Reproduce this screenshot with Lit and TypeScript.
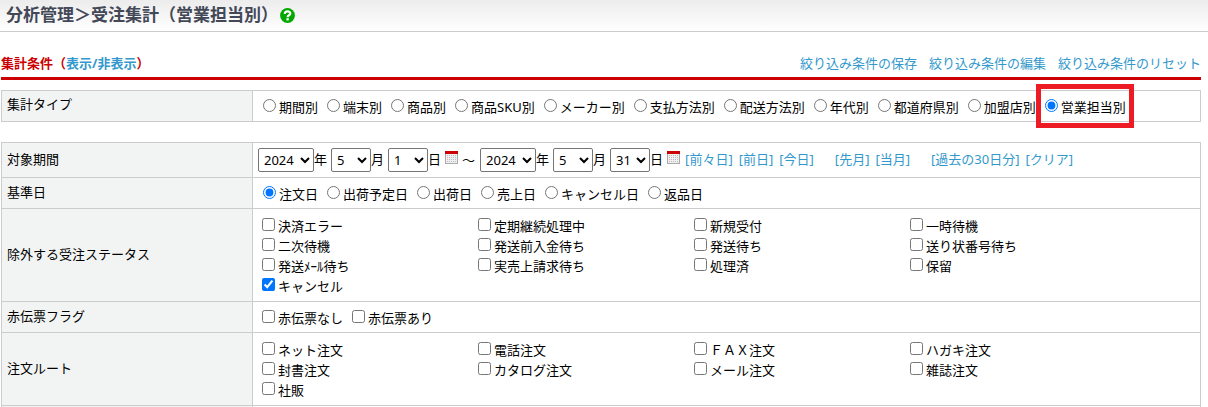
import { LitElement, html, css, svg } from "lit";
import { customElement, state } from "lit/decorators.js";

const TYPES = ["期間別", "端末別", "商品別", "商品SKU別", "メーカー別", "支払方法別", "配送方法別", "年代別", "都道府県別", "加盟店別", "営業担当別"];
const BASE_DATES = ["注文日", "出荷予定日", "出荷日", "売上日", "キャンセル日", "返品日"];
const STATUSES = [
  "決済エラー", "定期継続処理中", "新規受付", "一時待機",
  "二次待機", "発送前入金待ち", "発送待ち", "送り状番号待ち",
  "発送ﾒｰﾙ待ち", "実売上請求待ち", "処理済", "保留",
  "キャンセル",
];
const ROUTES = ["ネット注文", "電話注文", "ＦＡＸ注文", "ハガキ注文", "封書注文", "カタログ注文", "メール注文", "雑誌注文", "社販"];
const range = (from: number, to: number) => Array.from({ length: to - from + 1 }, (_, i) => from + i);

@customElement("app-root")
export class AppRoot extends LitElement {
  @state() private type = "営業担当別";
  @state() private baseDate = "注文日";
  @state() private open = true;

  static styles = css`
    :host {
      display: block;
      font: 13px/20px "Noto Sans", "Noto Sans CJK JP", sans-serif;
      color: #000;
      background: #fff;
    }
    .header {
      display: flex;
      align-items: center;
      gap: 2px;
      height: 31px;
      padding: 0 6px;
      border-bottom: 1px solid #ccc;
      background: linear-gradient(#ececec, #fff);
    }
    .title {
      margin: 0;
      font: bold 17px/28px "Noto Sans CJK JP", sans-serif;
      color: #434857;
      padding-bottom: 3px;
    }
    .help { display: block; width: 15px; height: 15px; }
    .main { padding: 22px 7px 0 1px; }
    .section {
      display: flex;
      justify-content: space-between;
      align-items: center;
      border-bottom: 3px solid #c00;
      height: 23px;
    }
    .heading { margin: 0; padding-bottom: 6px; font-size: 13px; line-height: 20px; color: #c00; }
    .actions { display: flex; gap: 12px; padding-bottom: 6px; }
    a { color: #39c; text-decoration: none; }
    .grid {
      width: 100%;
      border-collapse: collapse;
      table-layout: fixed;
      margin-top: 10px;
    }
    .grid + .grid { margin-top: 20px; }
    .grid th, .grid td { border: 1px solid #ccc; padding: 5px; text-align: left; vertical-align: middle; font-weight: normal; }
    .grid th { width: 240px; padding: 4px 5px 6px; background: #f2f4f4; }
    .grid .top { padding: 3px 5px 7px; vertical-align: top; }
    .grid .wide { padding: 7px 5px 5px; }
    .grid .next th, .grid .next td { height: 1px; padding: 0; border-bottom: 0; }
    .choices { display: flex; flex-wrap: wrap; column-gap: 6px; }
    .choice { display: flex; align-items: flex-start; height: 20px; white-space: nowrap; }
    .choice input { flex: none; width: 13px; height: 13px; margin: 3px 3px 0; }
    .choices .choice:first-child input { margin-left: 5px; }
    .choices .choice:first-child input[type="checkbox"] { margin-left: 4px; }
    .choices span { padding-top: 1px; }
    .checks { display: grid; grid-template-columns: repeat(3, 216px) 1fr; }
    .checks .choice input { margin: 2px 3px 0 4px; }
    .marked { position: relative; }
    .marked::after {
      content: "";
      position: absolute;
      inset: -12px -8px -12px -6px;
      border: 5px solid #ed1c24;
      pointer-events: none;
    }
    .period { display: flex; align-items: center; white-space: nowrap; }
    select {
      height: 24px;
      margin: 0;
      padding: 0 0 0 1px;
      border: 1px solid #767676;
      border-radius: 2px;
      background: #fff;
      color: #000;
      font: inherit;
    }
    .year { width: 56px; }
    .short { width: 40px; }
    .unit { margin-right: 4px; padding-bottom: 2px; }
    .calendar { padding: 0; margin-bottom: 5px; border: 0; background: none; }
    .calendar svg { display: block; width: 13px; height: 13px; }
    .tilde { margin: 0 5px 0 4px; }
    .presets { display: flex; gap: 21px; margin-left: 5px; padding-bottom: 2px; }
    .presets span { display: flex; gap: 6px; }
  `;

  private radios(name: string, items: string[], current: string, pick: (v: string) => void, marked = "") {
    return html`<div class="choices">${items.map(
      (t) => html`<label class="choice ${t === marked ? "marked" : ""}"><input type="radio" name=${name} .checked=${t === current} @change=${() => pick(t)} /><span>${t}</span></label>`
    )}</div>`;
  }

  private checks(items: string[], cls: string, checked = "") {
    return html`<div class=${cls}>${items.map(
      (t) => html`<label class="choice"><input type="checkbox" ?checked=${t === checked} /><span>${t}</span></label>`
    )}</div>`;
  }

  private picker(label: string, cls: string, from: number, to: number, value: number) {
    return html`<select class=${cls} aria-label=${label}>${range(from, to).map((n) => html`<option ?selected=${n === value}>${n}</option>`)}</select>`;
  }

  private date(label: string, day: number) {
    return html`${this.picker(`${label} 年`, "year", 2015, 2030, 2024)}<span class="unit">年</span>
      ${this.picker(`${label} 月`, "short", 1, 12, 5)}<span class="unit">月</span>
      ${this.picker(`${label} 日`, "short", 1, 31, day)}<span class="unit">日</span>
      <button class="calendar" type="button" aria-label=${`${label} カレンダー`}>
        <svg viewBox="0 0 13 13" shape-rendering="crispEdges">
          <rect width="13" height="13" fill="#aaa" />
          <rect x="1" y="3" width="11" height="9" fill="#f0f0f0" />
          <rect width="13" height="3" fill="#c00" />
          ${[4, 6, 8, 10].map((y) => [2, 4, 6, 8, 10].map((x) => svg`<rect x=${x} y=${y} width="1" height="1" fill=${x === 2 ? "#e2b0b0" : "#bbb"} />`))}
        </svg>
      </button>`;
  }

  private links(items: string[]) {
    return html`<span>${items.map((t) => html`<a href="#">[${t}]</a>`)}</span>`;
  }

  render() {
    return html`
      <header class="header">
        <h1 class="title">分析管理＞受注集計（営業担当別）</h1>
        <a href="#" aria-label="ヘルプ"><svg class="help" viewBox="0 0 15 15">
          <circle cx="7.5" cy="7.5" r="7.4" fill="#00a800" />
          <path d="M4.8 5.9C4.8 2.6 10.3 2.7 10.3 5.6C10.3 7.4 7.6 7.2 7.6 9.2" fill="none" stroke="#fff" stroke-width="2.2" />
          <rect x="6.4" y="10.2" width="2.4" height="2.2" fill="#fff" />
        </svg></a>
      </header>
      <main class="main">
        <div class="section">
          <h2 class="heading">集計条件（<a href="#" @click=${(e: Event) => { e.preventDefault(); this.open = !this.open; }}>表示/非表示</a>）</h2>
          <nav class="actions"><a href="#">絞り込み条件の保存</a><a href="#">絞り込み条件の編集</a><a href="#">絞り込み条件のリセット</a></nav>
        </div>
        ${this.open ? html`
        <table class="grid">
          <tr><th class="top" scope="row">集計タイプ</th><td>${this.radios("type", TYPES, this.type, (v) => (this.type = v), "営業担当別")}</td></tr>
        </table>
        <table class="grid">
          <tr><th scope="row">対象期間</th><td><div class="period">
            ${this.date("開始", 1)}<span class="tilde">～</span>${this.date("終了", 31)}
            <div class="presets">${this.links(["前々日", "前日", "今日"])}${this.links(["先月", "当月"])}${this.links(["過去の30日分", "クリア"])}</div>
          </div></td></tr>
          <tr><th scope="row">基準日</th><td>${this.radios("base", BASE_DATES, this.baseDate, (v) => (this.baseDate = v))}</td></tr>
          <tr><th scope="row">除外する受注ステータス</th><td class="wide">${this.checks(STATUSES, "checks", "キャンセル")}</td></tr>
          <tr><th scope="row">赤伝票フラグ</th><td>${this.checks(["赤伝票なし", "赤伝票あり"], "choices")}</td></tr>
          <tr><th scope="row">注文ルート</th><td class="wide">${this.checks(ROUTES, "checks")}</td></tr>
          <tr class="next"><th></th><td></td></tr>
        </table>` : ""}
      </main>`;
  }
}
